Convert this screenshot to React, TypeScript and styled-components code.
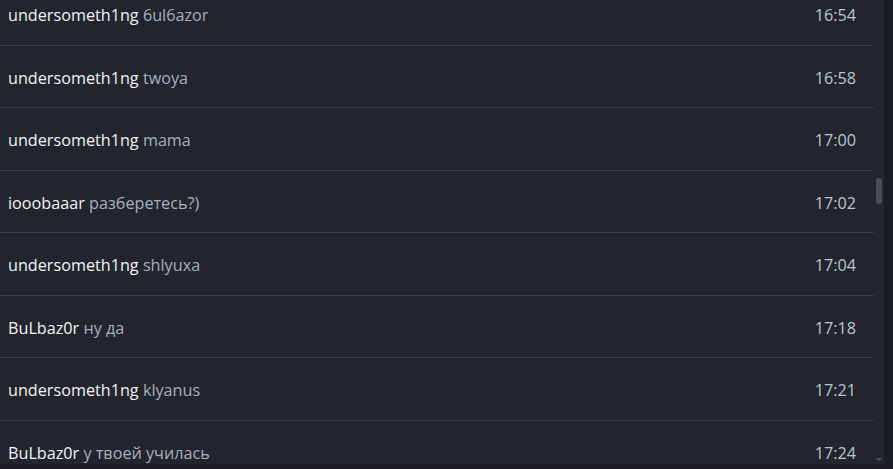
import React from "react";
import styled, { createGlobalStyle } from "styled-components";

const Global = createGlobalStyle`
  html, body { margin: 0; padding: 0; background: #1b1c20; }
  body { font-family: "Open Sans", "Noto Sans", sans-serif; }
`;

const Window = styled.div`
  width: 893px;
  height: 469px;
  display: flex;
  background: #1b1c20;
  overflow: hidden;
`;

const Pane = styled.div`
  width: 884px;
  height: 464px;
  display: flex;
  background: #22252d;
`;

const Viewport = styled.div`
  flex: 1;
  overflow: hidden;
`;

const List = styled.div<{ $offset: number }>`
  display: flex;
  flex-direction: column;
  margin-top: ${(p) => -p.$offset}px;
`;

const Row = styled.div`
  box-sizing: border-box;
  height: 62.5px;
  flex: none;
  display: flex;
  align-items: flex-start;
  justify-content: space-between;
  padding: 20px 18px 0 8px;
  border-bottom: 1px solid #383b43;
  font-size: 16.2px;
  line-height: 24px;
`;

const Text = styled.div`
  white-space: nowrap;
`;

const Name = styled.span`
  color: #f2f3f5;
`;

const Msg = styled.span`
  color: #a6b0bd;
`;

const Time = styled.span`
  color: #bcc5d0;
`;

const Track = styled.div`
  position: relative;
  width: 10px;
  flex: none;
  background: #23262e;
`;

const Thumb = styled.div`
  position: absolute;
  left: 2px;
  top: 178px;
  width: 6px;
  height: 26px;
  border-radius: 3px;
  background: #4b4e57;
`;

const Arrow = styled.div`
  position: absolute;
  left: 2px;
  bottom: 3px;
  width: 0;
  height: 0;
  border-left: 3px solid transparent;
  border-right: 3px solid transparent;
  border-top: 3px solid #55585f;
`;

const rows = [
  { name: "undersometh1ng", msg: "6ul6azor", time: "16:54" },
  { name: "undersometh1ng", msg: "twoya", time: "16:58" },
  { name: "undersometh1ng", msg: "mama", time: "17:00" },
  { name: "iooobaaar", msg: "разберетесь?)", time: "17:02" },
  { name: "undersometh1ng", msg: "shlyuxa", time: "17:04" },
  { name: "BuLbaz0r", msg: "ну да", time: "17:18" },
  { name: "undersometh1ng", msg: "klyanus", time: "17:21" },
  { name: "BuLbaz0r", msg: "у твоей училась", time: "17:24" },
];

export default function App() {
  return (
    <>
      <Global />
      <Window>
        <Pane>
          <Viewport>
            <List $offset={17}>
              {rows.map((r, i) => (
                <Row key={i}>
                  <Text>
                    <Name>{r.name}</Name> <Msg>{r.msg}</Msg>
                  </Text>
                  <Time>{r.time}</Time>
                </Row>
              ))}
            </List>
          </Viewport>
          <Track>
            <Thumb />
            <Arrow />
          </Track>
        </Pane>
      </Window>
    </>
  );
}
